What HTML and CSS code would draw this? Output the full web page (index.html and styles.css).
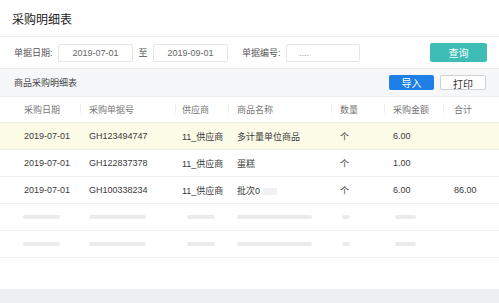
FILE: index.html
```html
<!DOCTYPE html>
<html lang="zh">
<head>
<meta charset="utf-8">
<link rel="stylesheet" href="styles.css">
</head>
<body>
<div class="page">
  <div class="title">采购明细表</div>
  <div class="filters">
    <span class="label">单据日期:</span>
    <div class="input center">2019-07-01</div>
    <span class="to">至</span>
    <div class="input center">2019-09-01</div>
    <span class="label label2">单据编号:</span>
    <div class="input placeholder">....</div>
    <div class="spacer"></div>
    <button class="btn-query">查询</button>
  </div>
  <div class="section">
    <span class="section-title">商品采购明细表</span>
    <div class="spacer"></div>
    <button class="btn-import">导入</button>
    <button class="btn-print">打印</button>
  </div>
  <div class="table">
    <div class="row head">
      <div class="c">采购日期</div>
      <div class="c sep">采购单据号</div>
      <div class="c sep">供应商</div>
      <div class="c sep">商品名称</div>
      <div class="c sep">数量</div>
      <div class="c sep">采购金额</div>
      <div class="c sep">合计</div>
    </div>
    <div class="row hl">
      <div class="c">2019-07-01</div>
      <div class="c">GH123494747</div>
      <div class="c">11_供应商</div>
      <div class="c">多计量单位商品</div>
      <div class="c">个</div>
      <div class="c">6.00</div>
      <div class="c"></div>
    </div>
    <div class="row">
      <div class="c">2019-07-01</div>
      <div class="c">GH122837378</div>
      <div class="c">11_供应商</div>
      <div class="c">蛋糕</div>
      <div class="c">个</div>
      <div class="c">1.00</div>
      <div class="c"></div>
    </div>
    <div class="row">
      <div class="c">2019-07-01</div>
      <div class="c">GH100338234</div>
      <div class="c">11_供应商</div>
      <div class="c">批次0<span class="blur"></span></div>
      <div class="c">个</div>
      <div class="c">6.00</div>
      <div class="c">86.00</div>
    </div>
    <div class="row sk">
      <div class="c"><i class="bar w37"></i></div>
      <div class="c"><i class="bar w57"></i></div>
      <div class="c"><i class="bar w28 off"></i></div>
      <div class="c"><i class="bar w75"></i></div>
      <div class="c"><i class="bar w8 off2"></i></div>
      <div class="c"><i class="bar w21 off2"></i></div>
      <div class="c"></div>
    </div>
    <div class="row sk">
      <div class="c"><i class="bar w37"></i></div>
      <div class="c"><i class="bar w57"></i></div>
      <div class="c"><i class="bar w28 off"></i></div>
      <div class="c"><i class="bar w75"></i></div>
      <div class="c"><i class="bar w8 off2"></i></div>
      <div class="c"><i class="bar w21 off2"></i></div>
      <div class="c"></div>
    </div>
  </div>
  <div class="fill"></div>
  <div class="footer"></div>
</div>
</body>
</html>
```
FILE: styles.css
```css
* { box-sizing: border-box; }
html, body { margin: 0; padding: 0; background: #fff; }
body {
  font-family: "Liberation Sans", "Noto Sans CJK SC", sans-serif;
  font-size: 9px;
  color: #3a3a3a;
}
.page { width: 499px; height: 303px; display: flex; flex-direction: column; }
.title {
  height: 37px;
  padding: 11px 0 0 12px;
  font-size: 12px;
  color: #222;
  border-bottom: 1px solid #ececec;
  line-height: 18px;
}
.filters {
  height: 32px;
  display: flex;
  align-items: center;
  padding: 0 12px 0 14px;
  border-bottom: 1px solid #ececec;
}
.label { color: #555; width: 44px; }
.label2 { margin-left: 14px; }
.input {
  width: 75px;
  height: 18px;
  border: 1px solid #e6e6e6;
  border-radius: 2px;
  color: #666;
  line-height: 16px;
}
.input.center { text-align: center; }
.input.placeholder { padding-left: 12px; color: #999; width: 74px; }
.to { width: 20px; text-align: center; color: #555; }
.spacer { flex: 1; }
button { font-family: inherit; font-size: 9px; cursor: pointer; }
.btn-query {
  width: 57px;
  height: 19px;
  border: none;
  border-radius: 2px;
  background: #3dbdb5;
  color: #fff;
  margin-top: -1px;
  font-size: 10px;
}
.section {
  height: 28px;
  background: #f6f7f9;
  display: flex;
  align-items: center;
  padding: 0 13px 0 14px;
  border-bottom: 1px solid #ececec;
}
.section-title { color: #444; }
.btn-import {
  width: 45px; height: 15px; border: none; border-radius: 2px;
  background: #1e7fe6; color: #fff; padding: 0; margin-right: 6px; font-size: 10px;
}
.btn-print {
  width: 46px; height: 15px; border: 1px solid #d2d2d2; border-radius: 2px;
  background: #fff; color: #333; padding: 0; font-size: 10px;
}
.table { display: flex; flex-direction: column; }
.row {
  display: grid;
  grid-template-columns: 80px 95px 53px 103px 53px 59px 1fr;
  height: 27px;
  align-items: center;
  border-bottom: 1px solid #f0f0f0;
}
.row.head { height: 26px; color: #777; border-bottom-color: #efefea; }
.row.hl { background: #fbfbe8; }
.c { padding-left: 9px; white-space: nowrap; position: relative; }
.c:first-child { padding-left: 24px; }
.c:nth-child(3) { padding-left: 7px; }
.c:last-child { padding-left: 11px; }
.head .sep::before {
  content: "";
  position: absolute;
  left: 0;
  top: 1px;
  width: 1px;
  height: 9px;
  background: #ededed;
}
.blur {
  display: inline-block;
  width: 14px;
  height: 7px;
  margin-left: 3px;
  background: #f1f1f1;
  vertical-align: middle;
}
.sk .c { display: flex; align-items: center; }
.sk .c:first-child { padding-left: 23px; }
.bar { display: block; height: 4px; border-radius: 2px; background: #ebebed; }
.w37 { width: 37px; }
.w57 { width: 57px; }
.w28 { width: 28px; }
.w75 { width: 75px; }
.w8 { width: 8px; }
.w21 { width: 21px; }
.off { margin-left: 5px; }
.off2 { margin-left: 2px; }
.fill { flex: 1; }
.footer { height: 14px; background: #eeeff2; }
```
